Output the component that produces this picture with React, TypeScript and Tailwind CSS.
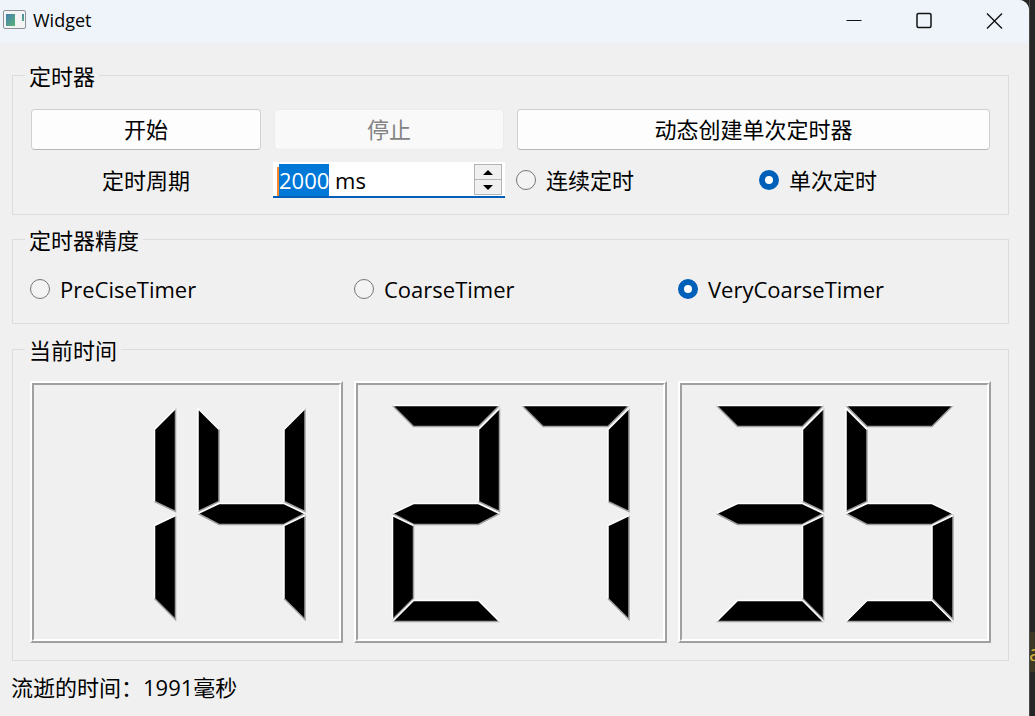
import { useEffect, useRef, useState, type ReactNode } from "react";

type Segment = { points: string; light: string; dark: string };

const SEGMENTS: Record<string, Segment> = {
  a: { points: "0,0 107,0 86,21 21,21", light: "0,0 107,0", dark: "107,0 86,21 21,21 0,0" },
  b: { points: "107,3 107,106 86,96 86,24", light: "86,96 86,24 107,3", dark: "107,3 107,106 86,96" },
  c: { points: "107,110 107,214 86,193 86,120", light: "86,193 86,120 107,110", dark: "107,110 107,214 86,193" },
  d: { points: "0,216 21,195 86,195 107,216", light: "0,216 21,195 86,195 107,216", dark: "0,216 107,216" },
  e: { points: "0,110 21,120 21,193 0,214", light: "0,214 0,110 21,120", dark: "21,120 21,193 0,214" },
  f: { points: "0,3 21,24 21,96 0,106", light: "0,106 0,3 21,24", dark: "21,24 21,96 0,106" },
  g: { points: "0,108 21,98 86,98 107,108 86,119 21,119", light: "0,108 21,98 86,98 107,108", dark: "107,108 86,119 21,119 0,108" },
};

const DIGITS: Record<string, string> = {
  "0": "abcdef",
  "1": "bc",
  "2": "abged",
  "3": "abgcd",
  "4": "fgbc",
  "5": "afgcd",
  "6": "afgedc",
  "7": "abc",
  "8": "abcdefg",
  "9": "abcdfg",
};

function Lcd({ value, label }: { value: string; label: string }) {
  return (
    <div className="border-2 border-t-white border-l-white border-r-[#a0a0a0] border-b-[#a0a0a0]">
      <div className="border-2 border-t-[#a0a0a0] border-l-[#a0a0a0] border-r-white border-b-white">
        <svg viewBox="0 0 305 254" className="block w-full" role="img" aria-label={`${label} ${value}`}>
          {value.split("").map((digit, i) => (
            <g key={i} transform={`translate(${34.5 + i * 129.5} 20.5)`}>
              {DIGITS[digit].split("").map((name) => (
                <g key={name} strokeWidth="1.5">
                  <polygon points={SEGMENTS[name].points} fill="#000" />
                  <polyline points={SEGMENTS[name].dark} fill="none" stroke="#a0a0a0" />
                  <polyline points={SEGMENTS[name].light} fill="none" stroke="#fff" />
                </g>
              ))}
            </g>
          ))}
        </svg>
      </div>
    </div>
  );
}

function Group({ title, className, children }: { title: string; className: string; children: ReactNode }) {
  return (
    <fieldset className={`min-w-0 border border-[#dcdcdc] px-[17px] ${className}`}>
      <legend className="-ml-[5px] px-1 pt-0.5 leading-6">{title}</legend>
      {children}
    </fieldset>
  );
}

function Radio({ name, label, defaultChecked }: { name: string; label: string; defaultChecked?: boolean }) {
  return (
    <label className="flex items-center gap-2.5 leading-8">
      <input
        type="radio"
        name={name}
        defaultChecked={defaultChecked}
        className="size-5 shrink-0 appearance-none rounded-full border border-[#767676] bg-[#f3f3f3] checked:border-6 checked:border-[#005fb8] checked:bg-white"
      />
      {label}
    </label>
  );
}

function PeriodSpinBox() {
  const [period, setPeriod] = useState(2000);
  const input = useRef<HTMLInputElement>(null);

  useEffect(() => {
    input.current?.focus();
    input.current?.setSelectionRange(0, String(period).length);
  }, [period]);

  return (
    <div className="flex h-9 border-b-2 border-[#005fb8] bg-white pr-[3px] pl-1">
      <div className="mt-[5px] -mr-0.5 w-0.5 bg-[#ff8728]" />
      <input
        id="period"
        ref={input}
        value={`${period} ms`}
        onChange={(e) => setPeriod(parseInt(e.target.value, 10) || 0)}
        className="min-w-0 flex-1 pt-0.5 pl-0.5 leading-8 outline-none selection:bg-[#0078d7] selection:text-white"
      />
      <div className="mt-0.5 mb-px flex w-7 flex-col border border-[#b4b4b4] bg-[#f0f0f0]">
        <button aria-label="增加" onClick={() => setPeriod(period + 1)} className="flex flex-1 items-center justify-center border-b border-[#b4b4b4]">
          <svg viewBox="0 0 10 5" className="h-[5px] w-2.5"><path d="M5 0 10 5H0Z" /></svg>
        </button>
        <button aria-label="减少" onClick={() => setPeriod(Math.max(0, period - 1))} className="flex flex-1 items-center justify-center">
          <svg viewBox="0 0 10 5" className="h-[5px] w-2.5"><path d="M0 0H10L5 5Z" /></svg>
        </button>
      </div>
    </div>
  );
}

const pushButton = "mx-px h-[41px] rounded-sm border border-[#d0d0d0] border-b-[#b8b8b8] bg-[#fdfdfd]";

export default function App() {
  return (
    <div className="flex min-h-screen bg-[#262626] font-['Open_Sans','Noto_Sans_CJK_SC',sans-serif] text-[22px] text-black">
      <div className="flex flex-1 flex-col overflow-hidden rounded-tr-[10px] bg-[#f0f0f0]">
        <header className="flex h-[43px] items-center bg-[#eff4fb] pr-[26px] pb-1 pl-[3px]">
          <svg viewBox="0 0 23 19" className="mr-[7px] h-[19px] w-[23px]">
            <defs>
              <linearGradient id="pane" x1="0" y1="0" x2="1" y2="1">
                <stop offset="0" stopColor="#477db0" />
                <stop offset="1" stopColor="#58b476" />
              </linearGradient>
            </defs>
            <rect x="0.5" y="0.5" width="22" height="18" rx="1.5" fill="#f4f4f4" stroke="#8c9096" />
            <rect x="3" y="4" width="9" height="12" fill="url(#pane)" />
            <rect x="19" y="4" width="2" height="7" fill="url(#pane)" />
          </svg>
          <h1 className="flex-1 text-lg leading-6">Widget</h1>
          <div className="flex gap-[52px]">
            <button aria-label="最小化">
              <svg viewBox="0 0 18 18" className="size-[18px]" fill="none" stroke="#111"><path d="M1.500 9.500H16.500" /></svg>
            </button>
            <button aria-label="最大化">
              <svg viewBox="0 0 18 18" className="size-[18px]" fill="none" stroke="#111" strokeWidth="1.5"><rect x="2" y="2.5" width="14" height="14" rx="1.5" /></svg>
            </button>
            <button aria-label="关闭">
              <svg viewBox="0 0 18 18" className="size-[18px]" fill="none" stroke="#111" strokeWidth="1.4"><path d="M2 2.500 17 17.500M17 2.500 2 17.500" /></svg>
            </button>
          </div>
        </header>

        <main className="flex flex-col pt-[19px] pr-5 pl-3">
          <Group title="定时器" className="pb-4">
            <div className="mt-[21px] grid grid-cols-4 gap-x-[11px] gap-y-3">
              <button className={pushButton}>开始</button>
              <button disabled className="mx-px h-[41px] rounded-sm border border-[#ececec] bg-[#f9f9f9] text-[#838383]">停止</button>
              <button className={`col-span-2 ${pushButton}`}>动态创建单次定时器</button>
              <label htmlFor="period" className="self-center text-center leading-8">定时周期</label>
              <PeriodSpinBox />
              <Radio name="mode" label="连续定时" />
              <Radio name="mode" label="单次定时" defaultChecked />
            </div>
          </Group>

          <Group title="定时器精度" className="mt-[11px] pb-[18px]">
            <div className="mt-[21px] grid grid-cols-3 gap-x-[11px]">
              <Radio name="precision" label="PreCiseTimer" />
              <Radio name="precision" label="CoarseTimer" />
              <Radio name="precision" label="VeryCoarseTimer" defaultChecked />
            </div>
          </Group>

          <Group title="当前时间" className="mt-3 pb-[17px]">
            <div className="mt-[19px] grid grid-cols-3 gap-x-[11px]">
              <Lcd value="14" label="时" />
              <Lcd value="27" label="分" />
              <Lcd value="35" label="秒" />
            </div>
          </Group>

          <p className="-ml-px mt-2.5 leading-8">流逝的时间：1991毫秒</p>
        </main>
      </div>
      <div className="flex w-1.5 flex-col overflow-hidden border-l border-[#4a4a4a] pt-[632px]">
        <div className="-ml-px bg-[#3d3824] leading-10 text-[#d3b03c]">a</div>
      </div>
    </div>
  );
}
